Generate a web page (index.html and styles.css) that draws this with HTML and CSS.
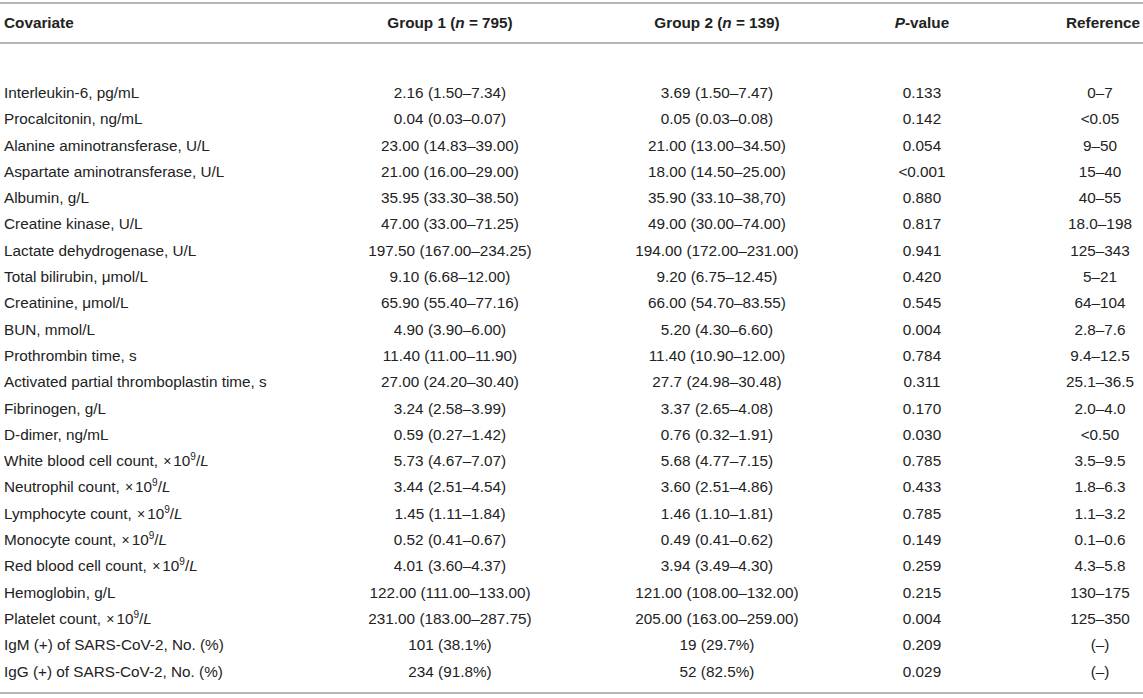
FILE: index.html
```html
<!DOCTYPE html>
<html lang="en">
<head>
    <meta charset="UTF-8">
    <meta name="viewport" content="width=device-width, initial-scale=1.0">
    <title>Laboratory findings</title>
    <link rel="stylesheet" href="styles.css">
</head>
<body>
    <table class="data-table">
        <colgroup>
            <col class="col-name">
            <col class="col-g1">
            <col class="col-g2">
            <col class="col-p">
            <col class="col-ref">
        </colgroup>
        <thead>
            <tr>
                <th class="name">Covariate</th>
                <th>Group 1 (<i>n</i> = 795)</th>
                <th>Group 2 (<i>n</i> = 139)</th>
                <th><i>P</i>-value</th>
                <th class="ref-head">Reference</th>
            </tr>
        </thead>
        <tbody>
            <tr class="spacer"><td colspan="5"></td></tr>
            <tr><td class="name">Interleukin-6, pg/mL</td><td>2.16 (1.50–7.34)</td><td>3.69 (1.50–7.47)</td><td>0.133</td><td class="ref">0–7</td></tr>
            <tr><td class="name">Procalcitonin, ng/mL</td><td>0.04 (0.03–0.07)</td><td>0.05 (0.03–0.08)</td><td>0.142</td><td class="ref">&lt;0.05</td></tr>
            <tr><td class="name">Alanine aminotransferase, U/L</td><td>23.00 (14.83–39.00)</td><td>21.00 (13.00–34.50)</td><td>0.054</td><td class="ref">9–50</td></tr>
            <tr><td class="name">Aspartate aminotransferase, U/L</td><td>21.00 (16.00–29.00)</td><td>18.00 (14.50–25.00)</td><td>&lt;0.001</td><td class="ref">15–40</td></tr>
            <tr><td class="name">Albumin, g/L</td><td>35.95 (33.30–38.50)</td><td>35.90 (33.10–38,70)</td><td>0.880</td><td class="ref">40–55</td></tr>
            <tr><td class="name">Creatine kinase, U/L</td><td>47.00 (33.00–71.25)</td><td>49.00 (30.00–74.00)</td><td>0.817</td><td class="ref">18.0–198</td></tr>
            <tr><td class="name">Lactate dehydrogenase, U/L</td><td>197.50 (167.00–234.25)</td><td>194.00 (172.00–231.00)</td><td>0.941</td><td class="ref">125–343</td></tr>
            <tr><td class="name">Total bilirubin, μmol/L</td><td>9.10 (6.68–12.00)</td><td>9.20 (6.75–12.45)</td><td>0.420</td><td class="ref">5–21</td></tr>
            <tr><td class="name">Creatinine, μmol/L</td><td>65.90 (55.40–77.16)</td><td>66.00 (54.70–83.55)</td><td>0.545</td><td class="ref">64–104</td></tr>
            <tr><td class="name">BUN, mmol/L</td><td>4.90 (3.90–6.00)</td><td>5.20 (4.30–6.60)</td><td>0.004</td><td class="ref">2.8–7.6</td></tr>
            <tr><td class="name">Prothrombin time, s</td><td>11.40 (11.00–11.90)</td><td>11.40 (10.90–12.00)</td><td>0.784</td><td class="ref">9.4–12.5</td></tr>
            <tr><td class="name">Activated partial thromboplastin time, s</td><td>27.00 (24.20–30.40)</td><td>27.7 (24.98–30.48)</td><td>0.311</td><td class="ref">25.1–36.5</td></tr>
            <tr><td class="name">Fibrinogen, g/L</td><td>3.24 (2.58–3.99)</td><td>3.37 (2.65–4.08)</td><td>0.170</td><td class="ref">2.0–4.0</td></tr>
            <tr><td class="name">D-dimer, ng/mL</td><td>0.59 (0.27–1.42)</td><td>0.76 (0.32–1.91)</td><td>0.030</td><td class="ref">&lt;0.50</td></tr>
            <tr><td class="name">White blood cell count, <span class="times">×</span>10<sup>9</sup>/<i>L</i></td><td>5.73 (4.67–7.07)</td><td>5.68 (4.77–7.15)</td><td>0.785</td><td class="ref">3.5–9.5</td></tr>
            <tr><td class="name">Neutrophil count, <span class="times">×</span>10<sup>9</sup>/<i>L</i></td><td>3.44 (2.51–4.54)</td><td>3.60 (2.51–4.86)</td><td>0.433</td><td class="ref">1.8–6.3</td></tr>
            <tr><td class="name">Lymphocyte count, <span class="times">×</span>10<sup>9</sup>/<i>L</i></td><td>1.45 (1.11–1.84)</td><td>1.46 (1.10–1.81)</td><td>0.785</td><td class="ref">1.1–3.2</td></tr>
            <tr><td class="name">Monocyte count, <span class="times">×</span>10<sup>9</sup>/<i>L</i></td><td>0.52 (0.41–0.67)</td><td>0.49 (0.41–0.62)</td><td>0.149</td><td class="ref">0.1–0.6</td></tr>
            <tr><td class="name">Red blood cell count, <span class="times">×</span>10<sup>9</sup>/<i>L</i></td><td>4.01 (3.60–4.37)</td><td>3.94 (3.49–4.30)</td><td>0.259</td><td class="ref">4.3–5.8</td></tr>
            <tr><td class="name">Hemoglobin, g/L</td><td>122.00 (111.00–133.00)</td><td>121.00 (108.00–132.00)</td><td>0.215</td><td class="ref">130–175</td></tr>
            <tr><td class="name">Platelet count, <span class="times">×</span>10<sup>9</sup>/<i>L</i></td><td>231.00 (183.00–287.75)</td><td>205.00 (163.00–259.00)</td><td>0.004</td><td class="ref">125–350</td></tr>
            <tr><td class="name">IgM (+) of SARS-CoV-2, No. (%)</td><td>101 (38.1%)</td><td>19 (29.7%)</td><td>0.209</td><td class="ref">(–)</td></tr>
            <tr class="last"><td class="name">IgG (+) of SARS-CoV-2, No. (%)</td><td>234 (91.8%)</td><td>52 (82.5%)</td><td>0.029</td><td class="ref">(–)</td></tr>
        </tbody>
    </table>
</body>
</html>
```

FILE: styles.css
```css
body {
    margin: 0;
    background-color: #fff;
    font-family: "Liberation Sans", Arial, Helvetica, sans-serif;
    font-size: 15.3px;
    color: #222;
}
.data-table {
    width: 1143px;
    margin-top: 2px;
    border-collapse: collapse;
    table-layout: fixed;
    border-top: 2px solid #b4b4b4;
    border-bottom: 2px solid #b4b4b4;
}
.col-name { width: 330px; }
.col-g1 { width: 240px; }
.col-g2 { width: 294px; }
.col-p { width: 116px; }
.col-ref { width: 163px; }
th {
    font-weight: bold;
    text-align: center;
    padding: 10px 4px 10px 4px;
    line-height: 18px;
    border-bottom: 2px solid #b4b4b4;
    white-space: nowrap;
}
td {
    text-align: center;
    padding: 4px 4px;
    line-height: 18.3px;
    white-space: nowrap;
}
.name {
    text-align: left;
}
.ref-head {
    text-align: right;
    padding-right: 3px;
}
.ref {
    padding-left: 77px;
    padding-right: 0;
}
.spacer td {
    height: 36px;
    padding: 0;
}
.last td {
    padding-bottom: 11px;
}
.times {
    font-size: 14px;
    margin-left: 1px;
    margin-right: 2px;
}
sup {
    font-size: 10px;
    line-height: 0;
    vertical-align: 6px;
}
```
